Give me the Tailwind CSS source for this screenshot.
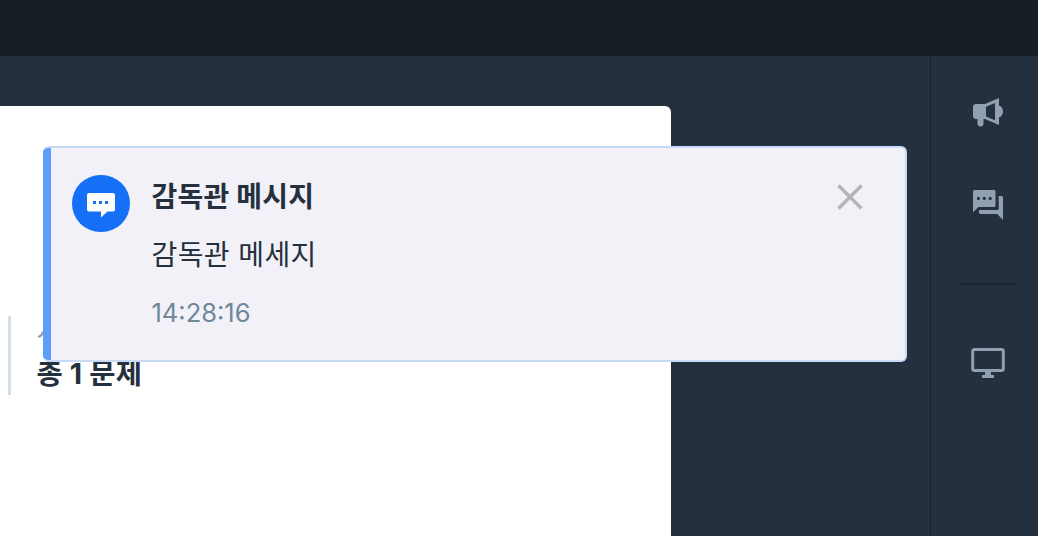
<!DOCTYPE html>
<html lang="ko">
<head>
<meta charset="utf-8">
<title>감독관 메시지</title>
<script src="https://cdn.jsdelivr.net/npm/@tailwindcss/browser@4"></script>
</head>
<body class="h-[536px] w-[1038px] overflow-hidden bg-[#25303e] font-['Inter','Noto_Sans_CJK_KR',sans-serif] text-[#25303e]">
<div class="relative flex h-full flex-col">
  <header class="h-14 shrink-0 bg-[#161d24]"></header>
  <div class="flex min-h-0 flex-1 justify-between">
    <main class="mt-[50px] w-[671px] rounded-tr-md bg-white pt-[210px] pl-2">
      <div class="flex h-[79px] flex-col border-l-[3px] border-[#d3dfe8] pl-[25.500px]">
        <p class="h-10 text-[26px] leading-8 text-[#8d9bab]">시험</p>
        <p class="whitespace-nowrap text-[28.500px] leading-[36px] font-bold tracking-[0.2px]">총 1 문제</p>
      </div>
    </main>
    <aside class="flex w-[108px] flex-col items-center border-l border-[#18222e] pl-[7px] text-[#90a0b2]">
      <svg class="mt-[41px] h-[30px] w-[30px] shrink-0" viewBox="0 0 30 30" fill="currentColor">
        <path fill-rule="evenodd" d="M12 7 26 1V28L12 22H10.500V26.500a3 3 0 0 1-6 0V22H3a3 3 0 0 1-3-3V10A3 3 0 0 1 3 7ZM13 9.800V19.500L22 23.200V6Z"/>
        <path d="M25 8.600c3 0 5 2.800 5 6s-2 6-5 6Z"/>
      </svg>
      <svg class="mt-[63px] h-[30px] w-[30px] shrink-0" viewBox="0 0 30 30" fill="currentColor">
        <path fill-rule="evenodd" d="M1.5 0H21a1.5 1.5 0 0 1 1.5 1.5V15.5A1.5 1.5 0 0 1 21 17H5.500L0 22.200V1.5A1.5 1.5 0 0 1 1.5 0ZM5.400 6.800a1.6 1.6 0 1 0 0 3.200 1.6 1.6 0 0 0 0-3.200Zm5.900 0a1.6 1.6 0 1 0 0 3.200 1.6 1.6 0 0 0 0-3.200Zm5.900 0a1.6 1.6 0 1 0 0 3.200 1.6 1.6 0 0 0 0-3.200Z"/>
        <path d="M25.700 6h2.800A1.5 1.5 0 0 1 30 7.500V30L24.200 24H7.500A1.5 1.5 0 0 1 6 22.500V20H24.200a1.5 1.5 0 0 0 1.5-1.5Z"/>
      </svg>
      <div class="mt-[63px] h-[2px] w-[57px] shrink-0 bg-[#18222e]"></div>
      <svg class="mt-[63px] h-[30px] w-[34px] shrink-0" viewBox="0 0 34 30">
        <rect x="1.700" y="1.500" width="30.600" height="21" rx="1.700" fill="none" stroke="currentColor" stroke-width="3"/>
        <path fill="currentColor" d="M14 23h6v4h3v3H11v-3h3Z"/>
      </svg>
    </aside>
  </div>

  <section class="absolute top-[146px] left-[43px] flex h-[216px] w-[864px] overflow-hidden rounded-md border-2 border-l-0 border-[#c7daf8] bg-[#f2f1f7]">
    <div class="-my-[2px] w-2 shrink-0 bg-[#5b9ff8]"></div>
    <div class="mt-[27px] ml-[21px] flex h-[57px] w-[58px] shrink-0 items-center justify-center rounded-full bg-[#1670f7]">
      <svg class="mt-[4px] h-[25px] w-[28px]" viewBox="0 0 28 25">
        <path fill="#fff" d="M2 0H26a2 2 0 0 1 2 2V16.500a2 2 0 0 1-2 2H20.500L14 24.500V18.500H2a2 2 0 0 1-2-2V2A2 2 0 0 1 2 0Z"/>
        <path fill="#1670f7" d="M6 8h3v3H6zm6 0h3v3h-3zm6 0h3v3h-3z"/>
      </svg>
    </div>
    <div class="ml-[21.500px] flex-1 whitespace-nowrap pt-[29px]">
      <h1 class="h-[58px] text-[28px] leading-10 font-bold tracking-[0.2px]">감독관 메시지</h1>
      <p class="h-[58px] text-[28px] leading-10 tracking-[0.4px]">감독관 메세지</p>
      <time class="block text-[25.500px] leading-10 tracking-[0px] text-[#6f8798]">14:28:16</time>
    </div>
    <button class="mt-[35.500px] mr-[42.500px] h-[26px] w-[26px] shrink-0" aria-label="닫기">
      <svg class="h-[26px] w-[26px]" viewBox="0 0 26 26" fill="none" stroke="#b1b6bc" stroke-width="3.400"><path d="m1.500 1.500 23 23m0-23-23 23"/></svg>
    </button>
  </section>
</div>
</body>
</html>
